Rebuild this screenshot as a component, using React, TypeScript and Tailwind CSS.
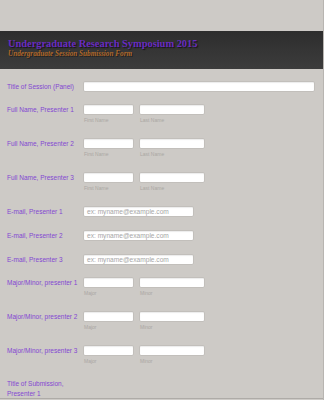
import type { ReactNode } from 'react'

const field = 'h-[11px] rounded-[2px] border border-[#c2bfbb] bg-white shadow-[inset_0_1px_1px_rgba(0,0,0,0.08)]'

function Row({ label, className, children }: { label: ReactNode; className: string; children?: ReactNode }) {
  return (
    <div className={`flex items-start ${className}`}>
      <div className="w-[83px] pl-[7px] text-[6.5px] leading-[11px] text-[#8347d2]">{label}</div>
      {children}
    </div>
  )
}

function Pair({ a, b }: { a: string; b: string }) {
  return (
    <div className="flex gap-[5px]">
      <div>
        <div className={`${field} w-[51px]`} />
        <div className="mt-[2px] pl-[1px] text-[5px] leading-[6px] text-[#aaa7a3]">{a}</div>
      </div>
      <div>
        <div className={`${field} w-[66px]`} />
        <div className="mt-[2px] pl-[1px] text-[5px] leading-[6px] text-[#aaa7a3]">{b}</div>
      </div>
    </div>
  )
}

function Email() {
  return (
    <div className={`${field} w-[111px] pl-[3px] text-[6.6px] leading-[9px] text-[#a6a6a6]`}>
      ex: myname@example.com
    </div>
  )
}

export default function App() {
  return (
    <div className="h-[400px] w-[324px] overflow-hidden border-r border-[#b8b5b1] bg-[#cdcac6] font-['Liberation_Sans',Arial,sans-serif]">
      <div className="h-[31px]" />

      {/* header */}
      <header className="h-[38px] bg-gradient-to-b from-[#2d2d2d] via-[#353535] to-[#3c3c3c] pl-[8px] pt-[7px]">
        <h1 className="font-['Liberation_Serif',serif] text-[10.4px] font-bold leading-[12px] text-[#6a2cc2] [text-shadow:1px_1px_1px_#151515]">
          Undergraduate Research Symposium 2015
        </h1>
        <p className="font-['Liberation_Serif',serif] text-[7.2px] font-bold italic leading-[9px] text-[#b0682a] [text-shadow:1px_1px_0_#1f1f1f]">
          Undergraduate Session Submission Form
        </p>
      </header>

      <div className="mt-[12px]">
        <Row label="Title of Session (Panel)" className="h-[23px]">
          <div className={`${field} w-[232px]`} />
        </Row>

        <Row label="Full Name, Presenter 1" className="h-[34px]">
          <Pair a="First Name" b="Last Name" />
        </Row>
        <Row label="Full Name, Presenter 2" className="h-[34px]">
          <Pair a="First Name" b="Last Name" />
        </Row>
        <Row label="Full Name, Presenter 3" className="h-[34px]">
          <Pair a="First Name" b="Last Name" />
        </Row>

        <Row label="E-mail, Presenter 1" className="h-[24px]">
          <Email />
        </Row>
        <Row label="E-mail, Presenter 2" className="h-[24px]">
          <Email />
        </Row>
        <Row label="E-mail, Presenter 3" className="h-[23px]">
          <Email />
        </Row>

        <Row label="Major/Minor, presenter 1" className="h-[34px]">
          <Pair a="Major" b="Minor" />
        </Row>
        <Row label="Major/Minor, presenter 2" className="h-[34px]">
          <Pair a="Major" b="Minor" />
        </Row>
        <Row label="Major/Minor, presenter 3" className="h-[34px]">
          <Pair a="Major" b="Minor" />
        </Row>

        <div className="pl-[7px] text-[6.5px] leading-[10px] text-[#8347d2]">
          Title of Submission,
          <br />
          Presenter 1
        </div>
        <div className="mt-[-1px] border-t border-[#aeaba7]" />
      </div>
    </div>
  )
}
